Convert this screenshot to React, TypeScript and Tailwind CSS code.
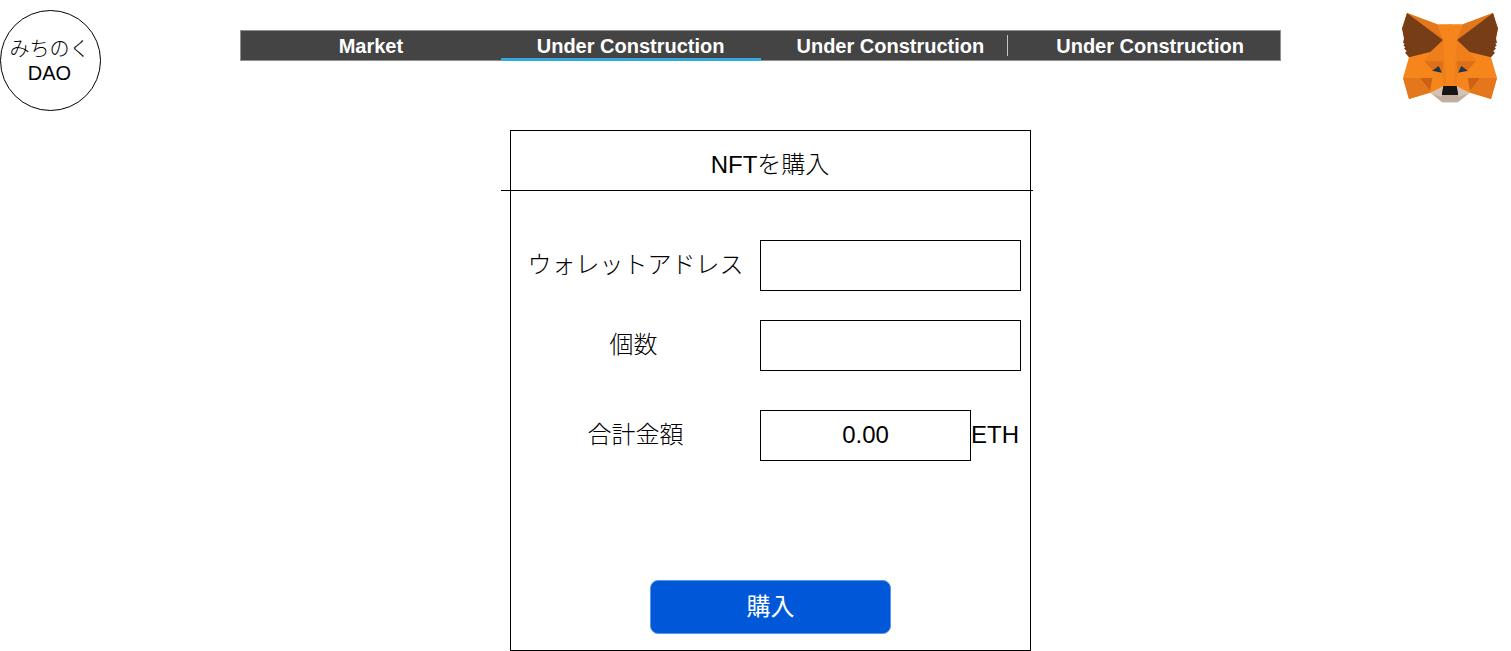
import React from "react";

const navItems = [
  { label: "Market", active: false, divider: false },
  { label: "Under Construction", active: true, divider: false },
  { label: "Under Construction", active: false, divider: true },
  { label: "Under Construction", active: false, divider: false },
];

function FoxHalf() {
  return (
    <>
      <polygon fill="#f6851b" points="48,24 138,58 180,58 180,250 154,284 118,263 54,282 36,219 54,157 33,70" />
      <polygon fill="#e4761b" points="48,24 138,58 156,105" />
      <polygon fill="#ee7f1b" points="118,141 156,105 158,169 100,169" />
      <polygon fill="#dd7019" points="100,169 158,169 154,203 143,184 123,194" />
      <polygon fill="#ee7f1b" points="156,105 165,232 158,243 153,202 158,168" />
      <polygon fill="#e4761b" points="36,219 87,219 117,262 54,282" />
      <polygon fill="#cd6116" points="87,219 124,219 117,258" />
      <polygon
        fill="#763d16"
        points="48,24 156,105 118,141 54,157 42,143 47,139 39,130 43,127 37,121 41,116 36,113 39,101 33,70 36,63"
      />
      <polygon fill="#233447" points="123,197 143,183 153,203" />
    </>
  );
}

function FoxLogo() {
  return (
    <svg viewBox="30 21 294 276" className="h-[92px] w-[98px] shrink-0" role="img" aria-label="MetaMask">
      <FoxHalf />
      <g transform="matrix(-1 0 0 1 354 0)">
        <FoxHalf />
      </g>
      <polygon fill="#d7c1b3" points="118,263 158,243 196,243 236,263 200,292 154,292" />
      <polygon fill="#c0ad9e" points="122,266 152,276 154,268 200,268 202,276 232,266 200,292 154,292" />
      <polygon fill="#161616" points="157,243 197,243 201,263 201,270 153,270 153,263" />
    </svg>
  );
}

const fieldClass =
  "h-[51px] min-w-0 rounded-none border border-black bg-white px-2 text-center text-2xl text-black outline-none";

export default function App() {
  return (
    <div className="bg-white font-['Liberation_Sans','Noto_Sans_CJK_JP',sans-serif] font-light text-black">
      <header className="flex items-start pt-[10px] pr-3">
        <a
          href="#home"
          className="flex size-[101px] shrink-0 flex-col items-center justify-center rounded-full border border-black pr-0.5 text-center text-xl leading-6"
        >
          <span className="whitespace-nowrap">みちのく</span>
          <span>DAO</span>
        </a>
        <nav className="mt-5 mr-[120px] ml-[139px] flex h-[31px] flex-1 border border-[#919191] bg-[#444444]">
          {navItems.map((item, i) => (
            <a
              key={i}
              href={`#tab-${i + 1}`}
              className="relative flex flex-1 items-center justify-center text-xl leading-6 font-bold whitespace-nowrap text-white"
            >
              {item.label}
              {item.active && <span className="absolute inset-x-0 -bottom-px h-[3px] bg-[#33aadd]" />}
              {item.divider && <span className="absolute top-1 right-3 h-[21px] w-px bg-[#c4c4c4]" />}
            </a>
          ))}
        </nav>
        <div className="pt-0.5">
          <FoxLogo />
        </div>
      </header>

      <main className="flex justify-center pt-[19px] pl-[30px]">
        <form className="w-[521px] border border-black" onSubmit={(e) => e.preventDefault()}>
          <h1 className="-mr-[3px] -ml-[10px] flex h-[60px] items-center justify-center border-b border-black pt-2 pr-1 pl-[10px] text-2xl leading-8">
            NFTを購入
          </h1>
          <div className="flex flex-col pt-[49px] pr-[9px] text-2xl leading-8">
            <div className="flex items-center">
              <label htmlFor="wallet" className="flex-1 pb-0.5 text-center">
                ウォレットアドレス
              </label>
              <input id="wallet" type="text" className={`${fieldClass} w-[261px]`} />
            </div>
            <div className="mt-[29px] flex items-center">
              <label htmlFor="count" className="flex-1 pr-1 pb-0.5 text-center">
                個数
              </label>
              <input id="count" type="text" inputMode="numeric" className={`${fieldClass} w-[261px]`} />
            </div>
            <div className="mt-[39px] flex items-center">
              <label htmlFor="total" className="flex-1 pb-0.5 text-center">
                合計金額
              </label>
              <div className="flex w-[261px] items-center">
                <input id="total" type="text" readOnly value="0.00" className={`${fieldClass} w-[211px] pb-0.5`} />
                <span className="pb-0.5">ETH</span>
              </div>
            </div>
          </div>
          <div className="flex justify-center pt-[119px] pb-4">
            <button
              type="submit"
              className="h-[54px] w-[241px] rounded-lg border border-[#5c97e6] bg-[#0057d8] text-2xl leading-8 font-normal text-white"
            >
              購入
            </button>
          </div>
        </form>
      </main>
    </div>
  );
}
